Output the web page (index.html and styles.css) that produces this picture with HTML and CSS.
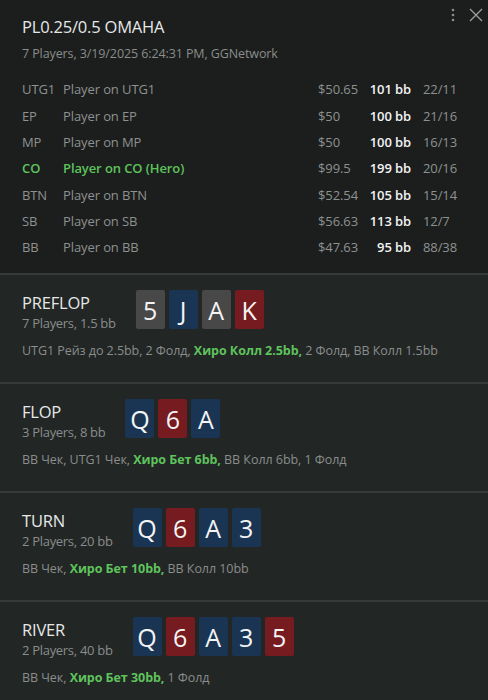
FILE: index.html
```html
<!DOCTYPE html>
<html>
<head>
<meta charset="utf-8">
<link rel="stylesheet" href="styles.css">
</head>
<body>
<div class="app">
  <header class="head">
    <div class="tools">
      <svg class="kebab" width="6" height="14" viewBox="0 0 6 14"><circle cx="3" cy="2" r="1.3" fill="#8a8d8c"/><circle cx="3" cy="7" r="1.3" fill="#8a8d8c"/><circle cx="3" cy="12" r="1.3" fill="#8a8d8c"/></svg>
      <svg class="close" width="16" height="16" viewBox="0 0 16 16"><path d="M2 2L14 14M14 2L2 14" stroke="#9a9d9c" stroke-width="1.4" fill="none"/></svg>
    </div>
    <h1 class="title">PL0.25/0.5 OMAHA</h1>
    <div class="sub">7 Players, 3/19/2025 6:24:31 PM, GGNetwork</div>
    <div class="players">
      <div class="row"><span class="pos">UTG1</span><span class="name">Player on UTG1</span><span class="amt">$50.65</span><span class="bb">101 bb</span><span class="ratio">22/11</span></div>
      <div class="row"><span class="pos">EP</span><span class="name">Player on EP</span><span class="amt">$50</span><span class="bb">100 bb</span><span class="ratio">21/16</span></div>
      <div class="row"><span class="pos">MP</span><span class="name">Player on MP</span><span class="amt">$50</span><span class="bb">100 bb</span><span class="ratio">16/13</span></div>
      <div class="row hero"><span class="pos">CO</span><span class="name">Player on CO (Hero)</span><span class="amt">$99.5</span><span class="bb">199 bb</span><span class="ratio">20/16</span></div>
      <div class="row"><span class="pos">BTN</span><span class="name">Player on BTN</span><span class="amt">$52.54</span><span class="bb">105 bb</span><span class="ratio">15/14</span></div>
      <div class="row"><span class="pos">SB</span><span class="name">Player on SB</span><span class="amt">$56.63</span><span class="bb">113 bb</span><span class="ratio">12/7</span></div>
      <div class="row"><span class="pos">BB</span><span class="name">Player on BB</span><span class="amt">$47.63</span><span class="bb">95 bb</span><span class="ratio">88/38</span></div>
    </div>
  </header>

  <section class="street">
    <div class="top">
      <div class="label"><div class="st">PREFLOP</div><div class="info">7 Players, 1.5 bb</div></div>
      <div class="cards"><span class="card g">5</span><span class="card b">J</span><span class="card g">A</span><span class="card r">K</span></div>
    </div>
    <div class="acts">UTG1 Рейз до 2.5bb, 2 Фолд, <b class="me">Хиро Колл 2.5bb,</b> 2 Фолд, BB Колл 1.5bb</div>
  </section>

  <section class="street">
    <div class="top">
      <div class="label"><div class="st">FLOP</div><div class="info">3 Players, 8 bb</div></div>
      <div class="cards"><span class="card b">Q</span><span class="card r">6</span><span class="card b">A</span></div>
    </div>
    <div class="acts">BB Чек, UTG1 Чек, <b class="me">Хиро Бет 6bb,</b> BB Колл 6bb, 1 Фолд</div>
  </section>

  <section class="street">
    <div class="top">
      <div class="label"><div class="st">TURN</div><div class="info">2 Players, 20 bb</div></div>
      <div class="cards"><span class="card b">Q</span><span class="card r">6</span><span class="card b">A</span><span class="card b">3</span></div>
    </div>
    <div class="acts">BB Чек, <b class="me">Хиро Бет 10bb,</b> BB Колл 10bb</div>
  </section>

  <section class="street">
    <div class="top">
      <div class="label"><div class="st">RIVER</div><div class="info">2 Players, 40 bb</div></div>
      <div class="cards"><span class="card b">Q</span><span class="card r">6</span><span class="card b">A</span><span class="card b">3</span><span class="card r">5</span></div>
    </div>
    <div class="acts">BB Чек, <b class="me">Хиро Бет 30bb,</b> 1 Фолд</div>
  </section>
</div>
</body>
</html>
```

FILE: styles.css
```css
* { box-sizing: border-box; }
html, body { margin: 0; padding: 0; }
body {
  background: #222625;
  font-family: "Open Sans", "Noto Sans", sans-serif;
  color: #8e9190;
  width: 488px;
  height: 700px;
  overflow: hidden;
}
.app { display: flex; flex-direction: column; }
.head {
  position: relative;
  background: #1b1e1d;
  padding: 15px 0 12px 22px;
  border-bottom: 2px solid #363a39;
  height: 275px;
}
.tools {
  position: absolute;
  top: 7px;
  right: 4px;
  display: flex;
  align-items: center;
  gap: 12px;
}
.title {
  margin: 0;
  font-weight: 400;
  font-size: 16.5px;
  color: #e6e8e7;
  line-height: 24px;
  letter-spacing: -0.2px;
}
.sub {
  font-size: 12.5px;
  line-height: 18px;
  margin-top: 6px;
  color: #8a8d8c;
  letter-spacing: -0.1px;
}
.players { margin-top: 13px; display: flex; flex-direction: column; }
.row {
  display: flex;
  align-items: center;
  height: 26.35px;
  font-size: 13px;
  letter-spacing: -0.1px;
}
.pos { width: 41px; }
.name { flex: 1; }
.amt { width: 47px; }
.bb { width: 46px; text-align: right; color: #f2f3f3; font-weight: 600; }
.ratio { width: 77px; padding-left: 12px; }
.hero .pos, .hero .name { color: #5fc35c; font-weight: 600; }

.street {
  border-bottom: 2px solid #363a39;
  padding: 15px 0 0 22px;
  height: 109px;
}
.street:last-child { border-bottom: none; }
.top { display: flex; align-items: flex-start; gap: 20px; }
.label { padding-top: 2px; }
.st { font-size: 16.5px; line-height: 22px; color: #e6e8e7; letter-spacing: -0.2px; }
.info { font-size: 13px; line-height: 18px; color: #8a8d8c; letter-spacing: -0.3px; }
.cards { display: flex; gap: 4px; }
.card {
  width: 29px;
  height: 39px;
  border-radius: 2px;
  display: flex;
  align-items: center;
  justify-content: center;
  color: #f4f4f4;
  font-size: 25px;
}
.card.g { background: #484848; }
.card.b { background: #1a3553; }
.card.r { background: #761b1f; }
.acts {
  margin-top: 10px;
  font-size: 12.5px;
  letter-spacing: -0.05px;
  color: #8a8d8c;
}
.me { color: #5fc35c; font-weight: 700; }
```
